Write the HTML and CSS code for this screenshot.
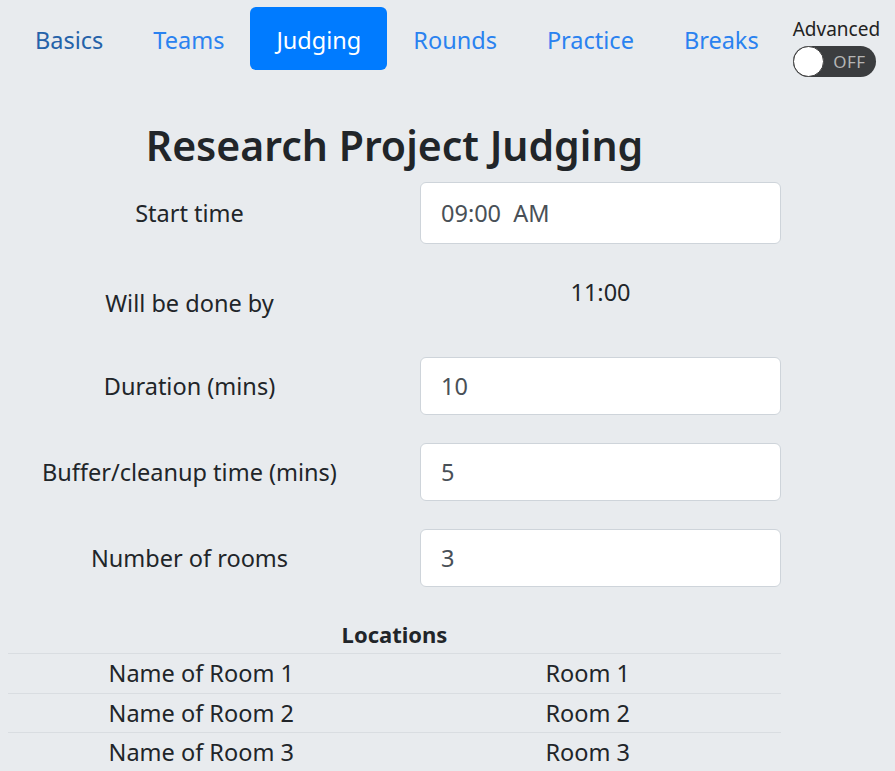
FILE: index.html
```html
<!DOCTYPE html>
<html>
<head>
<meta charset="utf-8">
<link rel="stylesheet" href="styles.css">
</head>
<body>
<header class="topbar">
  <nav class="tabs">
    <a class="tab tab-visited" href="#">Basics</a>
    <a class="tab" href="#">Teams</a>
    <a class="tab active" href="#">Judging</a>
    <a class="tab" href="#">Rounds</a>
    <a class="tab" href="#">Practice</a>
    <a class="tab" href="#">Breaks</a>
  </nav>
  <div class="advanced">
    <div class="advanced-label">Advanced</div>
    <div class="toggle">
      <span class="knob"></span>
      <span class="toggle-text">OFF</span>
    </div>
  </div>
</header>
<main class="content">
  <h2 class="title">Research Project Judging</h2>
  <div class="form-row">
    <label class="label">Start time</label>
    <input class="field field-time" type="text" value="09:00&nbsp;&nbsp;AM">
  </div>
  <div class="form-row form-row-static">
    <div class="label">Will be done by</div>
    <div class="static-value">11:00</div>
  </div>
  <div class="form-row">
    <label class="label">Duration (mins)</label>
    <input class="field" type="text" value="10">
  </div>
  <div class="form-row">
    <label class="label">Buffer/cleanup time (mins)</label>
    <input class="field" type="text" value="5">
  </div>
  <div class="form-row">
    <label class="label">Number of rooms</label>
    <input class="field" type="text" value="3">
  </div>
  <table class="locations">
    <thead>
      <tr><th colspan="2">Locations</th></tr>
    </thead>
    <tbody>
      <tr><td>Name of Room 1</td><td>Room 1</td></tr>
      <tr><td>Name of Room 2</td><td>Room 2</td></tr>
      <tr><td>Name of Room 3</td><td>Room 3</td></tr>
    </tbody>
  </table>
</main>
</body>
</html>
```
FILE: styles.css
```css
html, body {
  margin: 0;
  padding: 0;
}
body {
  background: #e8ebee;
  font-family: "Noto Sans", "Open Sans", sans-serif;
  color: #212529;
  font-size: 23.5px;
  overflow: hidden;
}
.topbar {
  display: flex;
  align-items: flex-start;
  padding: 7px 0 0 11px;
}
.tabs {
  display: flex;
  gap: 2px;
}
.tab {
  display: block;
  padding: 14px 24px 10px;
  line-height: 39px;
  color: #2a82f0;
  text-decoration: none;
  border-radius: 6px;
}
.tab-visited {
  color: #2462a9;
}
.tab.active {
  padding: 14px 26px 10px;
  background: #007bff;
  color: #fff;
}
.advanced {
  margin-left: 10px;
  padding-top: 10px;
}
.advanced-label {
  font-size: 19px;
  line-height: 24px;
  color: #222;
}
.toggle {
  position: relative;
  margin-top: 5px;
  width: 83px;
  height: 31px;
  border-radius: 16px;
  background: #3b3d3f;
  display: flex;
  align-items: center;
  justify-content: flex-end;
  padding-right: 10px;
  box-sizing: border-box;
}
.knob {
  position: absolute;
  left: 0;
  top: 0;
  width: 31px;
  height: 31px;
  box-sizing: border-box;
  border-radius: 50%;
  background: #fff;
  border: 1px solid #444;
}
.toggle-text {
  font-size: 17px;
  color: #b5b5b5;
  letter-spacing: 0.5px;
}
.content {
  margin-left: 8px;
  width: 773px;
}
.title {
  margin: 0 0 7px;
  padding-top: 38px;
  text-align: center;
  font-size: 41px;
  font-weight: 600;
  line-height: 60px;
  color: #212529;
}
.form-row {
  display: grid;
  grid-template-columns: 363px 1fr;
  column-gap: 49px;
  align-items: center;
  margin-bottom: 28px;
}
.label {
  text-align: center;
  line-height: 36px;
}
.field {
  height: 58px;
  box-sizing: border-box;
  border: 1px solid #ced4da;
  border-radius: 6px;
  background: #fff;
  padding: 0 20px;
  font-family: inherit;
  font-size: 23.5px;
  color: #495057;
  width: 100%;
  outline: none;
}
.field-time {
  height: 62px;
}
.form-row-static {
  height: 57px;
  align-items: start;
}
.form-row-static .label {
  align-self: center;
  margin-top: 4px;
}
.static-value {
  text-align: center;
  line-height: 36px;
  padding-top: 2px;
}
.locations {
  width: 100%;
  border-collapse: collapse;
}
.locations th {
  font-weight: 700;
  font-size: 22px;
  line-height: 38px;
  padding: 0;
  text-align: center;
}
.locations td {
  width: 50%;
  text-align: center;
  border-top: 1px solid #d9dde1;
  padding: 1px 0 0;
  line-height: 37.5px;
}
```
